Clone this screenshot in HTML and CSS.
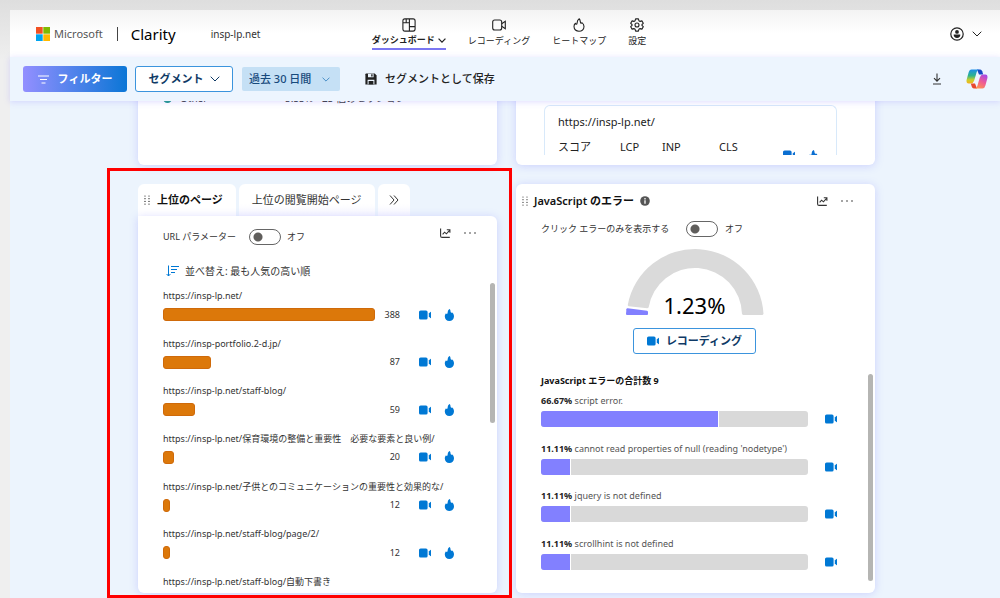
FILE: index.html
```html
<!DOCTYPE html>
<html lang="ja">
<head>
    <meta charset="UTF-8">
    <meta name="viewport" content="width=device-width, initial-scale=1.0">
    <title>Clarity - ダッシュボード</title>
    <link rel="stylesheet" href="styles.css">
</head>
<body>
    <!-- Shared icons -->
    <svg class="sprite" aria-hidden="true">
        <symbol id="i-chevron" viewBox="0 0 10 6"><path d="M0.7 0.7 5 5 9.3 0.7" fill="none" stroke="currentColor"/></symbol>
        <symbol id="i-camera" viewBox="0 0 12 10"><rect x="0" y="0.5" width="8.6" height="9" rx="1.6" fill="currentColor"/><path d="M9.8 3.4 11.3 1.9Q12 1.5 12 2.2V7.8Q12 8.5 11.3 8.1L9.8 6.6Z" fill="currentColor"/></symbol>
        <symbol id="i-flame" viewBox="0 0 11 12"><path d="M5.4 0C6.6 0.3 6.4 2 6.7 3.1C7 4 7.6 4.2 7.9 3.3C9 4 10 5.4 10 7.2C10 10 8 12 5.3 12C2.7 12 0.8 10 0.8 7.4C0.8 6 1.3 5 2 4.2C2.3 5 2.8 5.1 3.3 4.8C4 4.2 3.2 1.6 5.4 0Z" fill="currentColor"/></symbol>
        <symbol id="i-grip" viewBox="0 0 6 10"><g fill="currentColor"><circle cx="1" cy="1" r="0.6"/><circle cx="5" cy="1" r="0.6"/><circle cx="1" cy="3.7" r="0.6"/><circle cx="5" cy="3.7" r="0.6"/><circle cx="1" cy="6.4" r="0.6"/><circle cx="5" cy="6.4" r="0.6"/><circle cx="1" cy="9.1" r="0.6"/><circle cx="5" cy="9.1" r="0.6"/></g></symbol>
        <symbol id="i-trend" viewBox="0 0 11 10"><path d="M0.6 0.5V7.9Q0.6 9.4 2.1 9.4H9.8M2.6 6.4 4.6 4.2 6.4 5.8 9.6 2.3M6.8 1.7H9.9V4.8" fill="none" stroke="currentColor" stroke-width="1.1"/></symbol>
        <symbol id="i-more" viewBox="0 0 12 2"><g fill="currentColor"><circle cx="1" cy="1" r="0.8"/><circle cx="6" cy="1" r="0.8"/><circle cx="11" cy="1" r="0.8"/></g></symbol>
    </svg>

    <div class="app">
        <header class="header">
            <div class="brand">
                <a class="ms-logo" href="#">
                    <svg width="14" height="14" viewBox="0 0 14 14" aria-hidden="true"><path fill="#f25022" d="M0 0h6.7v6.7H0z"/><path fill="#7fba00" d="M7.3 0H14v6.7H7.3z"/><path fill="#00a4ef" d="M0 7.3h6.7V14H0z"/><path fill="#ffb900" d="M7.3 7.3H14V14H7.3z"/></svg>
                    <span>Microsoft</span>
                </a>
                <span class="brand-divider"></span>
                <a class="brand-name" href="#">Clarity</a>
                <span class="project-name">insp-lp.net</span>
            </div>
            <nav class="nav">
                <a class="nav-item active" href="#">
                    <svg width="14" height="14" viewBox="0 0 14 14" fill="none" stroke="currentColor" stroke-width="1.1"><rect x="0.9" y="0.9" width="12.2" height="12.2" rx="2"/><path d="M7.4 1V13M1 4.8H7.4M7.4 8.6H13M4.2 4.8V1"/></svg>
                    <span class="nav-label">ダッシュボード<svg width="8" height="5" stroke-width="1.6"><use href="#i-chevron"/></svg></span>
                </a>
                <a class="nav-item" href="#">
                    <svg width="14" height="14" viewBox="0 0 14 14" fill="none" stroke="currentColor" stroke-width="1.1"><rect x="0.7" y="2" width="9" height="10" rx="2"/><path d="M9.7 5.8 13.3 3.4V10.6L9.7 8.2"/></svg>
                    <span class="nav-label">レコーディング</span>
                </a>
                <a class="nav-item" href="#">
                    <svg width="14" height="14" viewBox="0 0 14 14" fill="none" stroke="currentColor" stroke-width="1.1" stroke-linejoin="round"><path d="M7.2 0.8C8.4 1.6 8 3.6 8.6 4.7C9 5.5 9.7 5.4 9.9 4.6C11.4 5.6 12 7 12 8.6C12 11.4 9.8 13.3 7 13.3C4.2 13.3 2 11.4 2 8.6C2 7 2.8 5.8 3.5 5.3C3.8 6.5 4.9 6.5 5 5.4C5.1 3.7 5.4 1.8 7.2 0.8Z"/></svg>
                    <span class="nav-label">ヒートマップ</span>
                </a>
                <a class="nav-item" href="#">
                    <svg width="14" height="14" viewBox="0 0 14 14" fill="none" stroke="currentColor" stroke-width="1.1" stroke-linejoin="round"><path d="M5.6 0.9H8.4L8.9 2.7L10.1 3.4L11.9 2.9L13.3 5.3L12 6.5V7.5L13.3 8.7L11.9 11.1L10.1 10.6L8.9 11.3L8.4 13.1H5.6L5.1 11.3L3.9 10.6L2.1 11.1L0.7 8.7L2 7.5V6.5L0.7 5.3L2.1 2.9L3.9 3.4L5.1 2.7Z"/><circle cx="7" cy="7" r="2"/></svg>
                    <span class="nav-label">設定</span>
                </a>
            </nav>
            <button class="account" aria-label="アカウント">
                <svg width="14" height="14" viewBox="0 0 14 14"><circle cx="7" cy="7" r="6.2" fill="none" stroke="currentColor" stroke-width="1.2"/><circle cx="7" cy="4.9" r="1.9" fill="currentColor"/><path d="M3.7 7.6H10.3C10.5 9.8 9.1 11 7 11S3.5 9.8 3.7 7.6Z" fill="currentColor"/></svg>
                <svg width="10" height="6"><use href="#i-chevron"/></svg>
            </button>
        </header>

        <div class="toolbar">
            <button class="btn btn-filter">
                <svg width="11" height="9" viewBox="0 0 11 9" fill="none" stroke="currentColor"><path d="M0 1H11M2 4.5H9M3.5 8H7.5"/></svg>
                フィルター
            </button>
            <button class="btn btn-segment">セグメント <svg width="10" height="6"><use href="#i-chevron"/></svg></button>
            <div class="date-range">
                <select aria-label="期間">
                    <option>過去 30 日間</option>
                </select>
                <svg width="8" height="5"><use href="#i-chevron"/></svg>
            </div>
            <button class="save-segment">
                <svg width="12" height="12" viewBox="0 0 12 12"><path d="M1.2 0.4H9.8L11.6 2.4V11.6H0.4V1.2Q0.4 0.4 1.2 0.4Z" fill="currentColor"/><path d="M3 0.8H8.6V4.2H3ZM2.6 6.8H9.4V11.2H2.6Z" fill="#edf5fe"/><path d="M6.2 1.2H7.6V3.6H6.2ZM3.6 8H8.4V11.6H3.6Z" fill="currentColor"/></svg>
                セグメントとして保存
            </button>
            <div class="toolbar-end">
                <button class="icon-btn" aria-label="ダウンロード"><svg width="10" height="12" viewBox="0 0 10 12" fill="none" stroke="currentColor" stroke-width="1.1"><path d="M5 0.5V8M2 5.2 5 8.2 8 5.2M1 11H9"/></svg></button>
                <button class="icon-btn" aria-label="Copilot">
                    <svg width="22" height="20" viewBox="0 0 22 20">
                        <defs>
                            <linearGradient id="cp-left" x1="0" y1="0" x2="0" y2="1"><stop offset="0" stop-color="#1a8fe8"/><stop offset="0.45" stop-color="#2fb48a"/><stop offset="0.75" stop-color="#c9cf2c"/><stop offset="1" stop-color="#f6b21b"/></linearGradient>
                            <linearGradient id="cp-right" x1="0.8" y1="0" x2="0.3" y2="1"><stop offset="0" stop-color="#a548e8"/><stop offset="0.5" stop-color="#ee5a96"/><stop offset="1" stop-color="#ff9351"/></linearGradient>
                        </defs>
                        <path d="M11 0.5H14.2Q15.6 0.5 16.2 2.2L17.2 5.6H13Z" fill="#1848c4"/>
                        <path d="M11 19.5H7.8Q6.4 19.5 5.8 17.8L4.8 14.4H9Z" fill="#e8482e"/>
                        <path d="M5.5 0.5H13Q11.4 0.7 10.7 3L8.2 11.5Q7.3 14.4 5 14.4H2.6Q-0.2 14.4 0.7 10.6L2.6 3.6Q3.4 0.5 5.5 0.5Z" fill="url(#cp-left)"/>
                        <path d="M16.5 19.5H9Q10.6 19.3 11.3 17L13.8 8.5Q14.7 5.6 17 5.6H19.4Q22.2 5.6 21.3 9.4L19.4 16.4Q18.6 19.5 16.5 19.5Z" fill="url(#cp-right)"/>
                    </svg>
                </button>
            </div>
        </div>

        <main class="content">
            <div class="board">
                <!-- First row, scrolled partly under the toolbar -->
                <section class="card devices-card">
                    <span class="dot"></span>
                    <span class="device-name">Other</span>
                    <span class="device-share">5.33%</span>
                    <span>23 個のセッション</span>
                </section>

                <section class="card vitals-card">
                    <div class="vitals">
                        <div>https://insp-lp.net/</div>
                        <div class="vitals-row">
                            <span>スコア</span><span>LCP</span><span>INP</span><span>CLS</span>
                            <div class="vitals-links">
                                <a href="#" aria-label="レコーディング"><svg width="12" height="10"><use href="#i-camera"/></svg></a>
                                <a href="#" aria-label="ヒートマップ"><svg width="11" height="12"><use href="#i-flame"/></svg></a>
                            </div>
                        </div>
                    </div>
                </section>

                <!-- Top pages -->
                <section class="pages">
                    <div class="tabs">
                        <button class="tab selected"><svg width="6" height="10"><use href="#i-grip"/></svg>上位のページ</button>
                        <button class="tab">上位の閲覧開始ページ</button>
                        <button class="tab tab-more" aria-label="その他のタブ"><svg width="10" height="10" viewBox="0 0 10 10" fill="none" stroke="currentColor"><path d="M1 0.5 5 5 1 9.5M5 0.5 9 5 5 9.5"/></svg></button>
                    </div>
                    <div class="card panel">
                        <div class="panel-head">
                            <label for="url-params">URL パラメーター</label>
                            <input class="toggle" type="checkbox" id="url-params">
                            <span>オフ</span>
                            <div class="card-actions">
                                <button class="icon-btn" aria-label="傾向"><svg width="11" height="10"><use href="#i-trend"/></svg></button>
                                <button class="icon-btn" aria-label="その他"><svg width="12" height="2"><use href="#i-more"/></svg></button>
                            </div>
                        </div>
                        <button class="sort">
                            <svg width="13" height="12" viewBox="0 0 13 12" fill="none" stroke="#0078d4"><path d="M2.5 0.5V11M0.6 9 2.5 11 4.4 9M5 1.5H13M5 4.5H11M5 7.5H9"/></svg>
                            並べ替え: 最も人気の高い順
                        </button>
                        <div class="scroll-area">
                            <ul class="page-list" id="page-list"></ul>
                            <div class="thumb thumb-pages"></div>
                        </div>
                    </div>
                    <div class="callout"></div>
                </section>

                <!-- JavaScript errors -->
                <section class="card errors">
                    <div class="errors-head">
                        <svg width="6" height="10"><use href="#i-grip"/></svg>
                        <h2>JavaScript のエラー</h2>
                        <svg width="10" height="10" viewBox="0 0 10 10"><circle cx="5" cy="5" r="4.8" fill="#555"/><path d="M5 2V3.4M5 4.3V7.8" stroke="#fff" stroke-width="1.3"/></svg>
                        <div class="card-actions">
                            <button class="icon-btn" aria-label="傾向"><svg width="11" height="10"><use href="#i-trend"/></svg></button>
                            <button class="icon-btn" aria-label="その他"><svg width="12" height="2"><use href="#i-more"/></svg></button>
                        </div>
                    </div>
                    <div class="errors-filter">
                        <label for="click-errors">クリック エラーのみを表示する</label>
                        <input class="toggle" type="checkbox" id="click-errors">
                        <span>オフ</span>
                    </div>
                    <div class="gauge">
                        <svg width="138" height="68" viewBox="0 0 138 68">
                            <path d="M1.7 58.2A68.5 68.5 0 0 1 137.5 67L136.5 68H117L116 67A47 47 0 0 0 22.6 60.5L21.4 61.2L2.6 59.3Z" fill="#dadada"/>
                            <path d="M1.6 61.2 21 63.8Q22 64 22 65V67Q22 68 21 68H1Q0 68 0 67L0.4 62.2Q0.6 61.1 1.6 61.2Z" fill="#8280ff"/>
                        </svg>
                        <span class="gauge-value">1.23%</span>
                    </div>
                    <button class="btn btn-recordings"><svg width="12" height="10"><use href="#i-camera"/></svg>レコーディング</button>
                    <div class="scroll-area">
                        <div class="error-body">
                            <h3>JavaScript エラーの合計数 9</h3>
                            <ul class="error-list" id="error-list"></ul>
                        </div>
                        <div class="thumb thumb-errors"></div>
                    </div>
                </section>
            </div>
        </main>
    </div>

    <script src="script.js"></script>
</body>
</html>
```
FILE: styles.css
```css
/* General Styles */
* {
    box-sizing: border-box;
}

body {
    margin: 0;
    font-family: "Noto Sans", "Noto Sans CJK JP", sans-serif;
    font-size: 10px;
    line-height: 14px;
    color: #333;
    background: #efefef linear-gradient(#dedede, #efefef) no-repeat 0 0 / 100% 60px;
}

button,
select,
input {
    font: inherit;
    color: inherit;
    margin: 0;
}

button {
    padding: 0;
    border: none;
    background: none;
    white-space: nowrap;
    cursor: pointer;
}

a {
    color: inherit;
    text-decoration: none;
}

ul,
h2,
h3 {
    margin: 0;
    padding: 0;
    list-style: none;
}

svg {
    display: block;
    flex: none;
}

.sprite {
    position: absolute;
    width: 0;
    height: 0;
}

.app {
    display: flex;
    flex-direction: column;
    height: 100vh;
    padding: 10px 0 0 10px;
}

/* Header */
.header {
    display: grid;
    grid-template-columns: 1fr auto 1fr;
    align-items: center;
    height: 47px;
    padding: 0 18px 0 26px;
    background: linear-gradient(#f3f3f3, #fff 24px);
}

.brand,
.ms-logo {
    display: flex;
    align-items: center;
}

.ms-logo {
    gap: 4px;
    font-size: 11px;
    color: #555;
}

.brand-divider {
    width: 1px;
    height: 14px;
    margin: 0 13px 0 14px;
    background: #444;
}

.brand-name {
    font-size: 15px;
    line-height: 20px;
    color: #000;
}

.project-name {
    margin-left: 35px;
    font-size: 10px;
}

.nav {
    display: flex;
    gap: 22px;
    align-self: start;
    padding-top: 8px;
}

.nav-item {
    display: flex;
    flex-direction: column;
    align-items: center;
    color: #222;
}

.nav-label {
    display: flex;
    align-items: center;
    gap: 3px;
    height: 18px;
    font-size: 9px;
}

.nav-item.active {
    font-weight: 700;
}

.nav-item.active .nav-label {
    border-bottom: 2px solid #7b77f2;
}

.account {
    display: flex;
    align-items: center;
    gap: 8px;
    justify-self: end;
    color: #222;
}

/* Toolbar */
.toolbar {
    display: flex;
    align-items: center;
    height: 44px;
    padding: 0 12px 0 13px;
    gap: 8px;
    background: #edf5fe;
    box-shadow: 0 1px 6px rgba(150, 140, 255, 0.3);
    position: relative;
    z-index: 1;
}

.btn {
    display: flex;
    align-items: center;
    justify-content: center;
    gap: 9px;
    height: 26px;
    border-radius: 3px;
    font-size: 11px;
    font-weight: 700;
}

.btn-filter {
    width: 104px;
    color: #fff;
    background: linear-gradient(90deg, #938fff, #0b76d6);
}

.btn-segment {
    width: 98px;
    gap: 6px;
    color: #0f3a66;
    background: #fff;
    border: 1px solid #3b94dd;
}

.date-range {
    display: flex;
    align-items: center;
    position: relative;
    margin-left: 1px;
}

.date-range select {
    width: 98px;
    height: 24px;
    padding: 0 20px 0 7px;
    border: none;
    border-radius: 2px;
    appearance: none;
    font-size: 11px;
    font-weight: 500;
    color: #174a7c;
    background: #c5e0f5;
}

.date-range svg {
    position: absolute;
    right: 10px;
    color: #2b7bbd;
    pointer-events: none;
}

.save-segment {
    display: flex;
    align-items: center;
    gap: 8px;
    margin-left: 17px;
    font-size: 11px;
    font-weight: 500;
    color: #222;
}

.toolbar-end {
    display: flex;
    align-items: center;
    gap: 24px;
    margin-left: auto;
}

/* Dashboard */
.content {
    display: flex;
    flex: 1;
    min-height: 0;
    overflow: hidden;
    background: #ecf4fd;
}

.board {
    display: grid;
    flex: 1;
    grid-template-columns: repeat(2, minmax(0, 1fr));
    grid-template-rows: auto 1fr;
    gap: 19px;
    margin: -20px 125px 5px 128px;
}

.card {
    background: #fff;
    border-radius: 6px;
    box-shadow: 0 1px 8px rgba(130, 130, 255, 0.3);
}

.icon-btn {
    display: flex;
    align-items: center;
}

.card-actions {
    display: flex;
    align-items: center;
    gap: 13px;
    margin-left: auto;
}

.devices-card {
    display: flex;
    align-items: flex-start;
    padding: 10px 25px;
}

.dot {
    width: 9px;
    height: 9px;
    margin: 3px 8px 0 0;
    border-radius: 50%;
    background: #149684;
}

.device-name {
    width: 105px;
}

.device-share {
    width: 37px;
}

.vitals-card {
    padding: 24px 38px 10px 28px;
}

.vitals {
    height: 50px;
    padding: 8px 17px 0 13px;
    overflow: hidden;
    border: 1px solid #d8e9fa;
    border-bottom: none;
    border-radius: 6px 6px 0 0;
    font-size: 11px;
    line-height: 16px;
    color: #222;
}

.vitals-row {
    display: grid;
    grid-template-columns: 62px 42px 57px 1fr auto;
    margin-top: 9px;
}

.vitals-links {
    display: flex;
    gap: 13px;
    padding-top: 11px;
    color: #0a6ed1;
}

/* Top pages */
.pages {
    display: flex;
    flex-direction: column;
    position: relative;
}

.tabs {
    display: flex;
    gap: 3px;
}

.tab {
    display: flex;
    align-items: center;
    justify-content: center;
    height: 32px;
    padding: 0 13px;
    gap: 7px;
    border-radius: 6px 6px 0 0;
    font-size: 11px;
    background: linear-gradient(#fff 60%, #f7f7ff);
}

.tab.selected {
    padding: 0 13px 0 6px;
    font-weight: 700;
    color: #111;
    background: #fff;
}

.tab-more {
    padding: 0 11px;
}

.panel {
    display: flex;
    flex: 1;
    flex-direction: column;
    padding: 12px 2px 4px 25px;
    border-top-left-radius: 0;
}

.panel-head {
    display: flex;
    align-items: center;
    gap: 6px;
    height: 18px;
    font-size: 9px;
}

.panel-head label {
    min-width: 80px;
}

.panel-head .card-actions {
    align-self: flex-start;
    padding-right: 19px;
}

.toggle {
    width: 32px;
    height: 16px;
    appearance: none;
    border: 1px solid #666;
    border-radius: 8px;
    background: radial-gradient(circle at 8px 7px, #605e5c 4px, #fff 5px);
}

.sort {
    display: flex;
    align-items: center;
    gap: 6px;
    margin: 18px 0 5px 3px;
}

.scroll-area {
    display: flex;
    flex: 1;
    gap: 1px;
}

.thumb {
    flex: none;
    width: 5px;
    border-radius: 3px;
    background: #b5b5b3;
}

.thumb-pages {
    height: 140px;
}

.page-list {
    display: flex;
    flex: 1;
    flex-direction: column;
    justify-content: space-between;
    padding: 6px 34px 0 0;
    font-size: 9px;
}

.page-row,
.error-row {
    display: flex;
    align-items: center;
    color: #0078d4;
}

.page-row {
    gap: 13px;
    height: 13px;
    margin-top: 5px;
}

.page-track {
    flex: 1;
}

.page-bar {
    height: 13px;
    border: 1px solid #cf6a0a;
    border-radius: 3px;
    background: #dc780a;
}

.page-count {
    width: 24px;
    margin: 0 6px 0 -12px;
    text-align: right;
    color: #333;
}

.page-url {
    white-space: nowrap;
}

/* Red frame around the top pages card */
.callout {
    position: absolute;
    inset: -16px -15px -5px -31px;
    border: 3px solid #f00;
    pointer-events: none;
}

/* JavaScript errors */
.errors {
    display: flex;
    flex-direction: column;
    padding: 8px 2px 12px 25px;
}

.errors-head {
    display: flex;
    align-items: center;
    gap: 6px;
    height: 18px;
    margin-left: -19px;
    padding-right: 20px;
}

.errors-head h2 {
    font-size: 11px;
    font-weight: 600;
    color: #111;
}

.errors-filter {
    display: flex;
    align-items: center;
    gap: 7px;
    height: 18px;
    margin-top: 10px;
    font-size: 9px;
}

.errors-filter label {
    min-width: 138px;
}

.gauge {
    display: grid;
    justify-items: center;
    align-items: end;
    margin: 9px 25px 0 0;
}

.gauge svg,
.gauge-value {
    grid-area: 1 / 1;
}

.gauge-value {
    font-size: 22px;
    line-height: 20px;
    color: #000;
}

.btn-recordings {
    align-self: center;
    gap: 7px;
    width: 123px;
    margin: 13px 25px 20px 0;
    color: #0f3a66;
    background: #fff;
    border: 1px solid #3b94dd;
}

.btn-recordings svg {
    color: #0078d4;
}

.thumb-errors {
    height: 207px;
}

.error-body {
    display: flex;
    flex: 1;
    flex-direction: column;
    padding: 0 30px 11px 0;
}

.error-body h3 {
    margin-bottom: 6px;
    font-size: 9px;
    color: #111;
}

.error-list {
    display: flex;
    flex: 1;
    flex-direction: column;
    justify-content: space-between;
    font-size: 9px;
    color: #555;
}

.error-list strong {
    color: #222;
}

.error-row {
    gap: 17px;
    margin-top: 3px;
}

.error-track {
    flex: 1;
    height: 16px;
    overflow: hidden;
    border-radius: 3px;
    background: #d9d9d9;
}

.error-bar {
    height: 16px;
    border-right: 1px solid #fff;
    background: #8280ff;
}
```
FILE: script.js
```js
const pages = [
    { url: 'https://insp-lp.net/', count: 388 },
    { url: 'https://insp-portfolio.2-d.jp/', count: 87 },
    { url: 'https://insp-lp.net/staff-blog/', count: 59 },
    { url: 'https://insp-lp.net/保育環境の整備と重要性　必要な要素と良い例/', count: 20 },
    { url: 'https://insp-lp.net/子供とのコミュニケーションの重要性と効果的な/', count: 12 },
    { url: 'https://insp-lp.net/staff-blog/page/2/', count: 12 },
    { url: 'https://insp-lp.net/staff-blog/自動下書き' }
];

const errors = [
    { share: 66.67, text: 'script error.' },
    { share: 11.11, text: "cannot read properties of null (reading 'nodetype')" },
    { share: 11.11, text: 'jquery is not defined' },
    { share: 11.11, text: 'scrollhint is not defined' }
];

const camera = '<a href="#" aria-label="レコーディング"><svg width="12" height="10"><use href="#i-camera"/></svg></a>';
const flame = '<a href="#" aria-label="ヒートマップ"><svg width="11" height="12"><use href="#i-flame"/></svg></a>';

document.getElementById('page-list').innerHTML = pages.map(function(page) {
    const row = page.count ? `
        <div class="page-row">
            <div class="page-track"><div class="page-bar" style="width: ${page.count / 388 * 100}%"></div></div>
            <span class="page-count">${page.count}</span>${camera}${flame}
        </div>` : '';
    return `<li><div class="page-url">${page.url}</div>${row}</li>`;
}).join('');

document.getElementById('error-list').innerHTML = errors.map(function(error) {
    return `<li>
        <div><strong>${error.share}%</strong> ${error.text}</div>
        <div class="error-row">
            <div class="error-track"><div class="error-bar" style="width: ${error.share}%"></div></div>${camera}
        </div>
    </li>`;
}).join('');
```
